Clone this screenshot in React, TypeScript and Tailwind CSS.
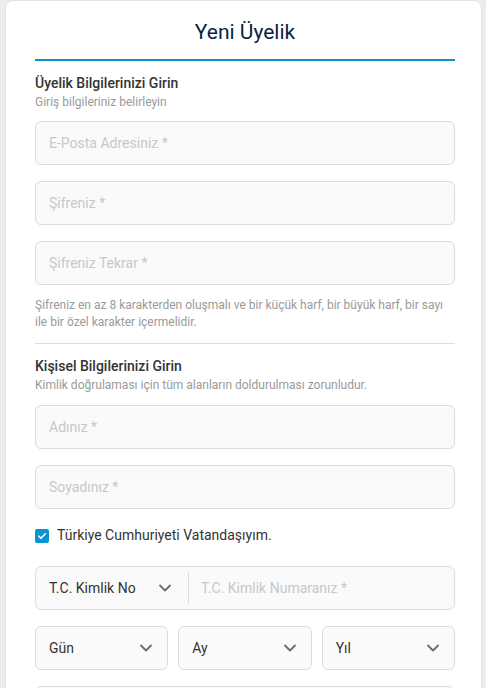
import * as React from "react"

/* Registration form card — "Yeni Üyelik" */

function Chevron() {
  return (
    <svg width="14" height="14" viewBox="0 0 14 14" fill="none" className="shrink-0">
      <path d="M2 4.5L7 9.5L12 4.5" stroke="#6b6b6b" strokeWidth="1.8" strokeLinecap="round" strokeLinejoin="round" />
    </svg>
  )
}

function Field({ placeholder }: { placeholder: string }) {
  return (
    <div className="flex h-[44px] items-center rounded-[6px] border border-[#dcdcdc] bg-[#fafafa] pl-[13px] pr-[14px] text-[14px] text-[#c8c8c8]">
      {placeholder}
    </div>
  )
}

function SelectBox({ label }: { label: string }) {
  return (
    <div className="flex h-[44px] flex-1 items-center justify-between rounded-[6px] border border-[#dcdcdc] bg-[#fafafa] pl-[13px] pr-[14px] text-[14px] text-[#333]">
      <span>{label}</span>
      <Chevron />
    </div>
  )
}

function SectionHead({ title, sub }: { title: string; sub: string }) {
  return (
    <div className="flex flex-col">
      <div className="text-[14px] font-medium leading-[18px] text-[#333]">{title}</div>
      <div className="mt-[2px] text-[12px] leading-[16px] text-[#9a9a9a]">{sub}</div>
    </div>
  )
}

export default function App() {
  return (
    <div className="h-[688px] overflow-hidden bg-[#ececec] pl-[5px] pr-[4px]" style={{ fontFamily: "Roboto, 'Noto Sans', sans-serif" }}>
      <div className="min-h-[720px] rounded-t-[8px] border border-[#e2e2e2] bg-white pl-[29px] pr-[26px]">
        <h1 className="pt-[15px] text-center text-[21px] leading-[32px] text-[#0b1f3f]">Yeni Üyelik</h1>
        <div className="mt-[11px] h-[2px] bg-[#0a94cf]" />

        <div className="mt-[13px]">
          <SectionHead title="Üyelik Bilgilerinizi Girin" sub="Giriş bilgileriniz belirleyin" />
        </div>

        <div className="mt-[11px] flex flex-col gap-[16px]">
          <Field placeholder="E-Posta Adresiniz *" />
          <Field placeholder="Şifreniz *" />
          <Field placeholder="Şifreniz Tekrar *" />
        </div>

        <p className="mt-[12px] text-[12px] leading-[17px] text-[#9a9a9a]">
          Şifreniz en az 8 karakterden oluşmalı ve bir küçük harf, bir büyük harf, bir sayı ile bir özel karakter içermelidir.
        </p>

        <div className="mt-[12px] h-px bg-[#dedede]" />

        <div className="mt-[13px]">
          <SectionHead title="Kişisel Bilgilerinizi Girin" sub="Kimlik doğrulaması için tüm alanların doldurulması zorunludur." />
        </div>

        <div className="mt-[12px] flex flex-col gap-[16px]">
          <Field placeholder="Adınız *" />
          <Field placeholder="Soyadınız *" />
        </div>

        <label className="mt-[16px] flex items-center gap-[8px] text-[14px] text-[#333]">
          <span className="flex h-[14px] w-[14px] items-center justify-center rounded-[2px] bg-[#0a94cf]">
            <svg width="10" height="10" viewBox="0 0 10 10" fill="none">
              <path d="M1.8 5.2L4 7.3L8.3 2.8" stroke="white" strokeWidth="1.6" strokeLinecap="round" strokeLinejoin="round" />
            </svg>
          </span>
          Türkiye Cumhuriyeti Vatandaşıyım.
        </label>

        <div className="mt-[20px] flex h-[44px] items-center rounded-[6px] border border-[#dcdcdc] bg-[#fafafa] text-[14px]">
          <div className="flex w-[152px] items-center justify-between pl-[13px] pr-[16px] text-[#333]">
            <span>T.C. Kimlik No</span>
            <Chevron />
          </div>
          <div className="h-[32px] w-px bg-[#dcdcdc]" />
          <div className="pl-[12px] text-[#c8c8c8]">T.C. Kimlik Numaranız *</div>
        </div>

        <div className="mt-[16px] flex gap-[10px]">
          <SelectBox label="Gün" />
          <SelectBox label="Ay" />
          <SelectBox label="Yıl" />
        </div>

        <div className="mt-[16px]">
          <Field placeholder="" />
        </div>
      </div>
    </div>
  )
}
